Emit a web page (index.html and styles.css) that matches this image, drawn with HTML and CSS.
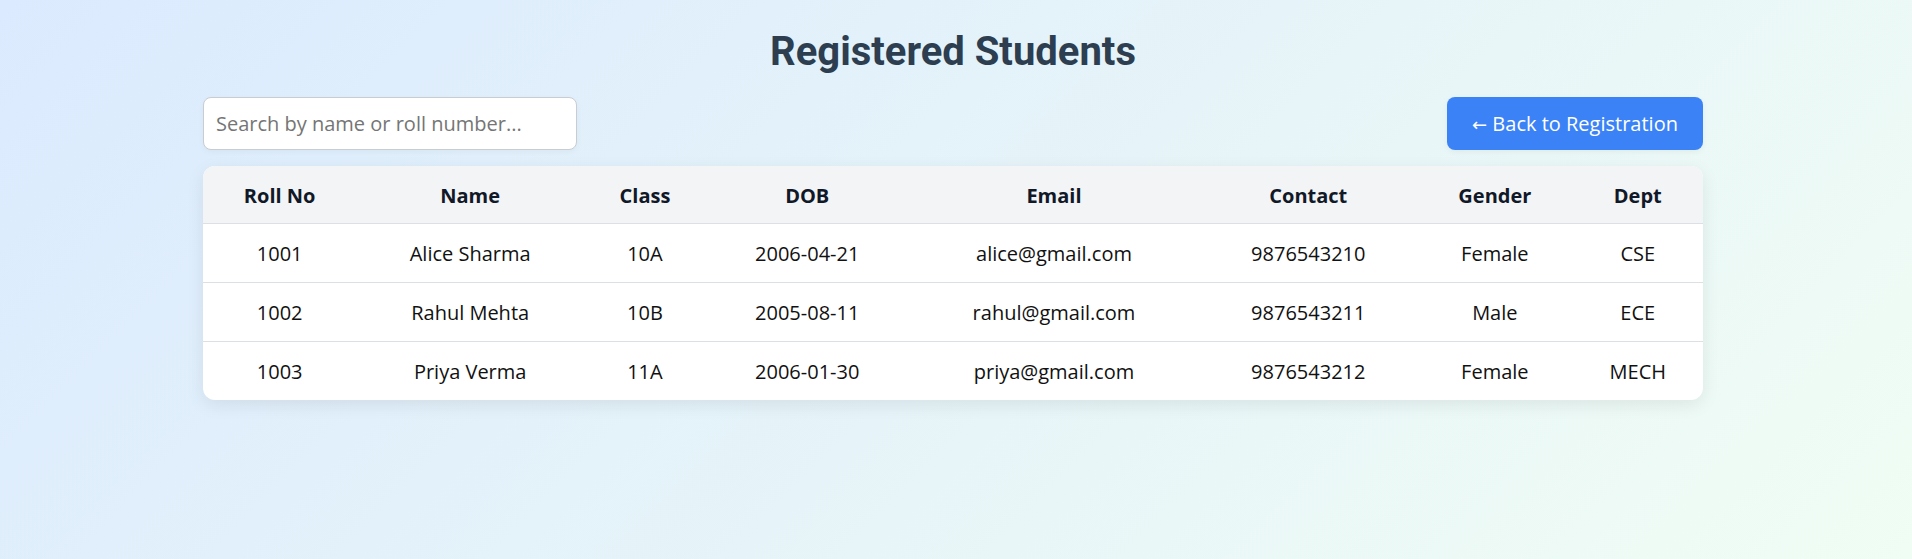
FILE: index.html
```html
<!DOCTYPE html>
<html lang="en">
<head>
<meta charset="utf-8">
<title>Registered Students</title>
<link rel="stylesheet" href="styles.css">
</head>
<body>
<main class="page">
  <h1 class="title">Registered Students</h1>
  <div class="controls">
    <input class="search" type="text" placeholder="Search by name or roll number...">
    <button class="back-btn" type="button"><span class="arrow">←</span> Back to Registration</button>
  </div>
  <div class="table-card">
    <table class="students">
      <thead>
        <tr>
          <th>Roll No</th>
          <th>Name</th>
          <th>Class</th>
          <th>DOB</th>
          <th>Email</th>
          <th>Contact</th>
          <th>Gender</th>
          <th>Dept</th>
        </tr>
      </thead>
      <tbody>
        <tr>
          <td>1001</td><td>Alice Sharma</td><td>10A</td><td>2006-04-21</td><td>alice@gmail.com</td><td>9876543210</td><td>Female</td><td>CSE</td>
        </tr>
        <tr>
          <td>1002</td><td>Rahul Mehta</td><td>10B</td><td>2005-08-11</td><td>rahul@gmail.com</td><td>9876543211</td><td>Male</td><td>ECE</td>
        </tr>
        <tr>
          <td>1003</td><td>Priya Verma</td><td>11A</td><td>2006-01-30</td><td>priya@gmail.com</td><td>9876543212</td><td>Female</td><td>MECH</td>
        </tr>
      </tbody>
    </table>
  </div>
</main>
</body>
</html>
```
FILE: styles.css
```css
* { box-sizing: border-box; }

html, body { height: 100%; }

body {
  margin: 0;
  padding: 0 6px 0 0;
  font-family: "Open Sans", "Noto Sans", sans-serif;
  font-size: 20px;
  color: #111;
  background: linear-gradient(135deg, #dbeafe 0%, #f0fdf4 100%);
  min-height: 559px;
}

.page {
  max-width: 1500px;
  margin: 0 auto;
  padding-top: 28px;
}

.title {
  margin: 0;
  text-align: center;
  font-family: Roboto, "Open Sans", sans-serif;
  font-weight: 700;
  font-size: 40px;
  line-height: 47px;
  color: #2c3e50;
}

.controls {
  margin-top: 22px;
  display: flex;
  justify-content: space-between;
  align-items: center;
}

.search {
  width: 374px;
  height: 53px;
  padding: 0 12px;
  border: 1px solid #c9ccd1;
  border-radius: 8px;
  background: #fff;
  font-family: inherit;
  font-size: 20px;
  color: #111;
  box-shadow: 0 2px 6px rgba(0, 0, 0, 0.04);
  outline: none;
}

.search::placeholder { color: #757575; }

.back-btn {
  width: 256px;
  height: 53px;
  padding: 0;
  border: none;
  border-radius: 8px;
  background: #3b82f6;
  color: #fff;
  font-family: inherit;
  font-size: 20px;
  cursor: pointer;
  box-shadow: 0 2px 6px rgba(0, 0, 0, 0.05);
}

.arrow {
  font-family: "DejaVu Sans", sans-serif;
  font-size: 18px;
}

.table-card {
  margin-top: 16px;
  background: #fff;
  border-radius: 12px;
  overflow: hidden;
  box-shadow: 0 5px 18px rgba(0, 0, 0, 0.08);
}

.students {
  width: 100%;
  border-collapse: collapse;
  text-align: center;
}

.students th {
  padding: 16px 15px 14px;
  line-height: 27px;
  font-weight: 700;
  color: #111827;
  background: #f3f4f6;
  border-bottom: 1px solid #dcdfe3;
}

.students td {
  padding: 16px 15px 14px;
  line-height: 28px;
  color: #111;
  border-bottom: 1px solid #dcdfe3;
}

.students tbody tr:last-child td { border-bottom: none; }
```
